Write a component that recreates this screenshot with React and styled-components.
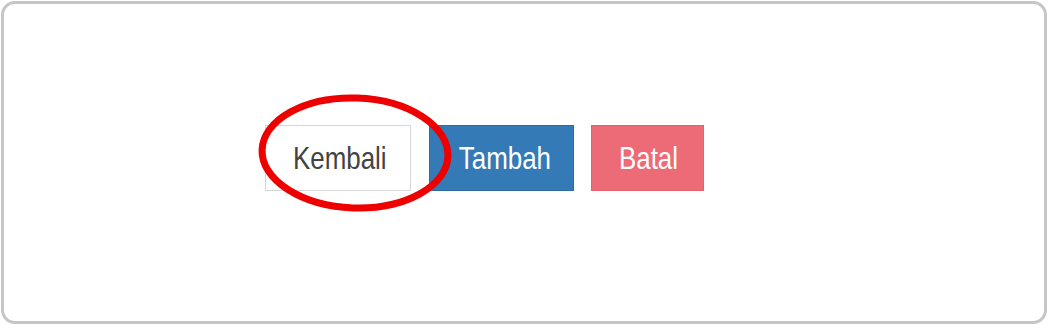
import React from 'react';
import styled, {createGlobalStyle, css} from 'styled-components';

const GlobalStyle = createGlobalStyle`
  html, body {
    margin: 0;
    padding: 0;
    background: #fff;
  }
`;

const Frame = styled.div`
  box-sizing: border-box;
  margin: 1px;
  width: 1046px;
  height: 323px;
  border: 3px solid #c6c6c6;
  border-radius: 14px;
  background: #fff;
  padding: 121px 0 0 261px;
`;

const ButtonRow = styled.div`
  position: relative;
  display: flex;
  align-items: flex-start;
`;

const variants = {
  default: css`
    background: #fff;
    color: #434343;
    border-color: #d6d6d6;
    margin-right: 18px;
  `,
  primary: css`
    background: #337ab7;
    color: #fff;
    border-color: #2e6da4;
    margin-right: 17px;
  `,
  danger: css`
    background: #ed6b76;
    color: #fff;
    border-color: #e6606c;
  `,
};

const Button = styled.button`
  box-sizing: border-box;
  display: flex;
  align-items: center;
  justify-content: center;
  height: 66px;
  width: ${(p) => p.$width}px;
  border: 1px solid;
  border-radius: 0;
  font-family: "Liberation Sans", Arial, sans-serif;
  font-size: 32px;
  padding: 0;
  cursor: pointer;
  ${(p) => variants[p.$variant]}
`;

// the screenshot is squeezed sideways, so the label is too
const Label = styled.span`
  display: inline-block;
  transform: scaleX(0.81);
  white-space: nowrap;
  margin-left: ${(p) => p.$shift || 0}px;
`;

const Highlight = styled.svg`
  position: absolute;
  left: -8px;
  top: -34px;
  pointer-events: none;
  overflow: visible;
`;

function App() {
  return (
    <>
      <GlobalStyle />
      <Frame>
        <ButtonRow>
          <Button $variant="default" $width={146}><Label $shift={3}>Kembali</Label></Button>
          <Button $variant="primary" $width={145}><Label $shift={6}>Tambah</Label></Button>
          <Button $variant="danger" $width={113}><Label $shift={2}>Batal</Label></Button>
          <Highlight width="200" height="124" viewBox="0 0 200 124">
            <ellipse
              cx="98"
              cy="62"
              rx="93"
              ry="55"
              fill="none"
              stroke="#ee0000"
              strokeWidth="7"
              transform="rotate(2 98 62)"
            />
          </Highlight>
        </ButtonRow>
      </Frame>
    </>
  );
}

export default App;
